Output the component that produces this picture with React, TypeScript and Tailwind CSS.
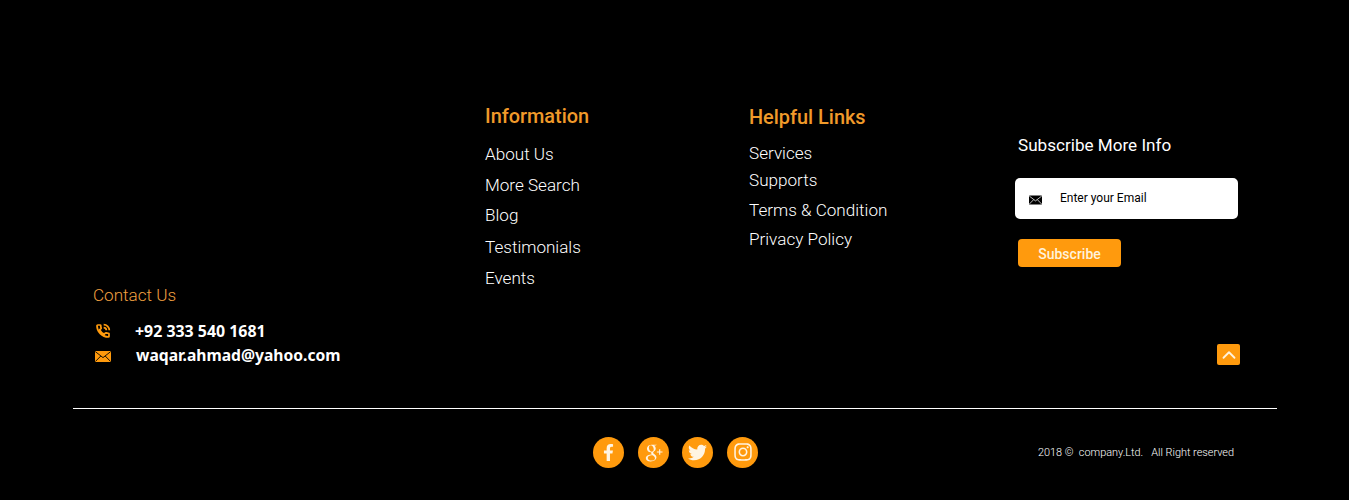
import { FaFacebookF, FaTwitter, FaInstagram } from "react-icons/fa";
import { TiSocialGooglePlus } from "react-icons/ti";
import { FiChevronUp } from "react-icons/fi";

const roboto = "font-['Roboto',sans-serif]";

function Mail({ color, line, className }: { color: string; line: string; className: string }) {
  return (
    <svg viewBox="0 0 16 11" className={className}>
      <rect x="0" y="0" width="16" height="11" rx="0.5" fill={color} />
      <path d="M0.3 0.6 L8 6.6 L15.7 0.6 M0.3 10.6 L5.8 5 M15.7 10.6 L10.2 5" stroke={line} strokeWidth="0.9" fill="none" />
    </svg>
  );
}

function Phone({ className }: { className: string }) {
  return (
    <svg viewBox="0 0 24 24" className={className} fill="none" stroke="#ff9a0d" strokeWidth="2.6">
      <path d="M20.01 15.38c-1.23 0-2.42-.2-3.53-.56a.977.977 0 00-1.01.24l-1.57 1.97c-2.83-1.35-5.48-3.9-6.89-6.83l1.95-1.66c.27-.28.35-.67.24-1.02-.37-1.11-.56-2.3-.56-3.53 0-.54-.45-.99-.99-.99H4.19C3.65 3 3 3.24 3 3.99 3 13.28 10.73 21 20.01 21c.71 0 .99-.63.99-1.18v-3.45c0-.54-.45-.99-.99-.99z" />
      <path d="M13 2.5a8.5 8.5 0 0 1 8.5 8.5M13 7a4 4 0 0 1 4 4" />
    </svg>
  );
}

const info = [
  ["About Us", "mb-[11px]"],
  ["More Search", "mb-[10px]"],
  ["Blog", "mb-[12px]"],
  ["Testimonials", "mb-[11px]"],
  ["Events", ""],
];
const help = [
  ["Services", "mb-[7px]"],
  ["Supports", "mb-[10px]"],
  ["Terms & Condition", "mb-[9px]"],
  ["Privacy Policy", ""],
];

const social = [
  [<FaFacebookF key="f" className="text-[17px]" />, "mr-[14px]"],
  [<TiSocialGooglePlus key="g" className="text-[27px]" />, "mr-[13px]"],
  [<FaTwitter key="t" className="text-[19px]" />, "mr-[14px]"],
  [<FaInstagram key="i" className="text-[20px]" />, ""],
] as const;

export default function App() {
  return (
    <div className={`${roboto} h-[500px] w-full overflow-hidden bg-black text-white`}>
      <div className="ml-[73px] mr-[72px] flex h-[409px] border-b border-white pl-[20px]">
        <div className="w-[392px] pt-[285px]">
          <h3 className="text-[17.1px] leading-[20px] font-light text-[#f2a040]">Contact Us</h3>
          <div className="mt-[14px] flex h-[24px] items-center font-['Noto_Sans',sans-serif] text-[15.9px] font-bold">
            <Phone className="ml-[2px] mr-[24px] h-[16px] w-[16px] shrink-0" />
            <span className="translate-y-[1px]">+92 333 540 1681</span>
          </div>
          <div className="flex h-[24px] items-center font-['Noto_Sans',sans-serif] text-[15.65px] font-bold">
            <Mail color="#ff9a0d" line="#000" className="ml-[2px] mr-[27px] h-[11px] w-[16px] shrink-0 translate-y-[1px]" />
            <span className="ml-[-2px] translate-y-[1px]">waqar.ahmad@yahoo.com</span>
          </div>
        </div>

        <div className="w-[264px] pt-[105px]">
          <h3 className="text-[19.9px] leading-[24px] font-medium text-[#f09a2a]">Information</h3>
          <ul className="mt-[15px] text-[17.1px] leading-[20px] font-light">
            {info.map(([t, m]) => (
              <li key={t} className={m}>{t}</li>
            ))}
          </ul>
        </div>

        <div className="w-[266px] pt-[106px]">
          <h3 className="text-[19.9px] leading-[24px] font-medium text-[#f09a2a]">Helpful Links</h3>
          <ul className="mt-[13px] text-[17.1px] leading-[20px] font-light">
            {help.map(([t, m]) => (
              <li key={t} className={m}>{t}</li>
            ))}
          </ul>
        </div>

        <div className="w-[225px] pt-[135px]">
          <h3 className="ml-[3px] text-[17.1px] leading-[20px] font-normal">Subscribe More Info</h3>
          <div className="mt-[23px] flex h-[41px] w-[223px] items-center rounded-[5px] bg-white pb-[2px] pl-[14px] text-[12px] text-black">
            <Mail color="#000" line="#fff" className="mr-[18px] h-[10px] w-[13px] translate-y-[2px]" />
            Enter your Email
          </div>
          <button className="mt-[20px] ml-[3px] block h-[28px] w-[103px] rounded-[4px] bg-[#ff9a0d] pt-[2px] text-[14px] font-medium text-[#fff2dc]">
            Subscribe
          </button>
          <div className="mt-[77px] ml-[202px] flex h-[21px] w-[23px] items-center justify-center rounded-[2px] bg-[#ff9a0d] text-[#fff2dc]">
            <FiChevronUp className="text-[22px]" />
          </div>
        </div>
      </div>

      <div className="mt-[27px] flex h-[32px] items-center pl-[593px]">
        <div className="flex w-[445px]">
          {social.map(([icon, m], i) => (
            <span key={i} className={`flex h-[31px] w-[31px] items-center justify-center rounded-full bg-[#ff9a0d] text-[#fff4e2] ${m}`}>
              {icon}
            </span>
          ))}
        </div>
        <span className="translate-y-[1px] text-[10.9px] font-light whitespace-pre">2018 ©  company.Ltd.   All Right reserved</span>
      </div>
    </div>
  );
}
